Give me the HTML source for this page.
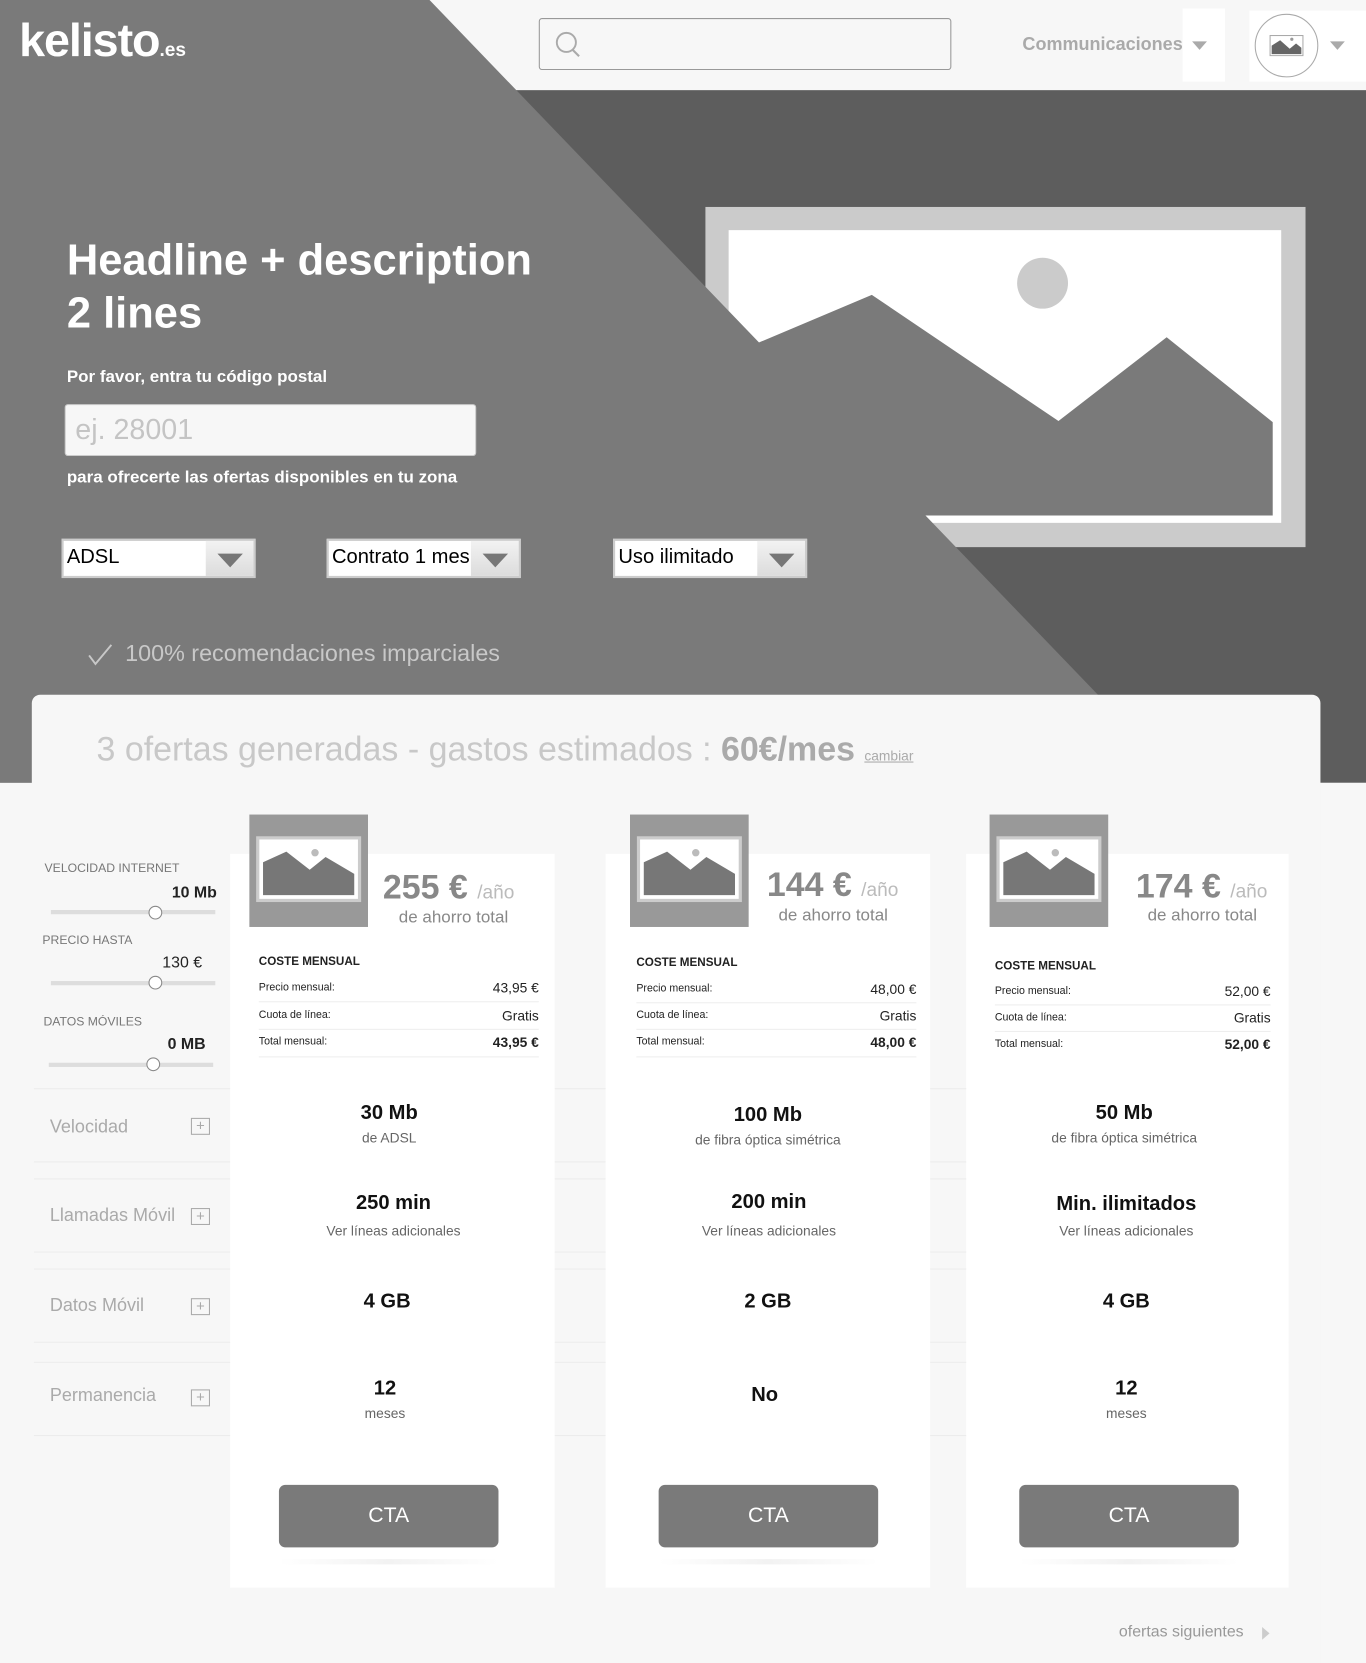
<!DOCTYPE html>
<html><head><meta charset="utf-8">
<style>
*{margin:0;padding:0;box-sizing:border-box}
html,body{width:1366px;height:1663px;overflow:hidden;background:#f7f7f7;font-family:"Liberation Sans",sans-serif}
#w{position:absolute;left:0;top:0;width:1288px;height:1568px;transform:scale(1.0606);transform-origin:0 0;background:#f7f7f7}
.a{position:absolute}
.t{position:absolute;white-space:nowrap}
.c{text-align:center}
.dd{position:absolute;width:183px;height:37px;background:#fff;border:2px solid #ccc;}
.dd span{position:absolute;left:3px;top:5px;font-size:19px;color:#000}
.dd i{position:absolute;right:0;top:0;width:45px;height:33px;background:linear-gradient(#f2f2f2,#dcdcdc)}
.dd i:after{content:"";position:absolute;left:11px;top:12px;border-left:12px solid transparent;border-right:12px solid transparent;border-top:13px solid #777}
.lbl{position:absolute;font-size:11.5px;color:#777;text-transform:uppercase}
.val{position:absolute;font-size:15px;color:#222;font-weight:bold}
.track{position:absolute;height:4px;background:#ddd;width:155px}
.knob{position:absolute;width:13px;height:13px;border-radius:50%;border:1px solid #888;background:#fff}
.col{position:absolute;background:#fff;top:805px;height:692px}
.row{position:absolute;left:32px;width:1183px;height:70px;border-top:1px solid #ececec;border-bottom:1px solid #ececec}
.rl{position:absolute;left:47px;font-size:17px;color:#aaa}
.plus{position:absolute;left:180px;width:18px;height:16px;border:1px solid #aaa;color:#aaa;font-size:14px;line-height:13px;text-align:center}
.big{position:absolute;font-weight:bold;font-size:19px;color:#111;text-align:center;width:306px}
.sub{position:absolute;font-size:13px;color:#666;text-align:center;width:306px}
.cta{position:absolute;width:207px;height:59px;background:#7a7a7a;border-radius:6px;color:#fff;font-size:20px;text-align:center;line-height:59px}
.tb{position:absolute;font-size:11px;color:#222}
</style></head><body><div id="w">
<!-- hero -->
<div class="a" style="left:0;top:0;width:1288px;height:738px;background:#5d5d5d"></div>
<div class="a" style="left:0;top:0;width:1288px;height:85px;background:#f7f7f7"></div>
<!-- hero image -->
<svg class="a" style="left:665px;top:195px" width="566" height="321">
<rect width="566" height="321" fill="#cbcbcb"/>
<rect x="22" y="22" width="521" height="276" fill="#fff"/>
<circle cx="318" cy="72" r="24" fill="#cbcbcb"/>
<polygon points="22,140 157,83 333,202 435,123 535,203 535,291 22,291" fill="#7a7a7a"/>
</svg>
<svg class="a" style="left:0;top:0" width="1288" height="738"><polygon points="0,0 405,0 1115,738 0,738" fill="#7a7a7a"/></svg>
<!-- header -->
<div class="t" style="left:18px;top:14px;font-size:44px;font-weight:bold;color:#fff;letter-spacing:-1px">kelisto<span style="font-size:18px;letter-spacing:0">.es</span></div>
<div class="a" style="left:508px;top:17px;width:389px;height:49px;border:1px solid #999;border-radius:3px;background:#f7f7f7"></div>
<svg class="a" style="left:522px;top:29px" width="28" height="26"><circle cx="12" cy="11" r="9" fill="none" stroke="#aaa" stroke-width="1.8"/><line x1="18" y1="18" x2="24" y2="24" stroke="#aaa" stroke-width="2"/></svg>
<div class="t" style="left:964px;top:32px;font-size:17px;font-weight:bold;color:#aaa">Communicaciones</div>
<div class="a" style="left:1115px;top:8px;width:40px;height:69px;background:#fff"></div>
<div class="a" style="left:1124px;top:39px;border-left:7px solid transparent;border-right:7px solid transparent;border-top:8px solid #aaa"></div>
<div class="a" style="left:1178px;top:10px;width:110px;height:67px;background:#fff"></div>
<div class="a" style="left:1183px;top:13px;width:60px;height:60px;border-radius:50%;border:1px solid #aaa;background:#fff"></div>
<svg class="a" style="left:1197px;top:33px" width="32" height="20"><rect x="0.5" y="0.5" width="31" height="19" fill="#fff" stroke="#aaa"/><polygon points="2,18 2,10 10,5 19,13 25,8 30,12 30,18" fill="#666"/><circle cx="21" cy="4" r="1.5" fill="#999"/></svg>
<div class="a" style="left:1254px;top:39px;border-left:7px solid transparent;border-right:7px solid transparent;border-top:8px solid #aaa"></div>
<!-- hero text -->
<div class="t" style="left:63px;top:220px;font-size:41px;font-weight:bold;color:#fff;line-height:50px">Headline + description<br>2 lines</div>
<div class="t" style="left:63px;top:347px;font-size:16px;font-weight:bold;color:#fff">Por favor, entra tu código postal</div>
<div class="a" style="left:61px;top:381px;width:388px;height:49px;background:#f7f7f7;border:1px solid #ccc;border-radius:3px"></div>
<div class="t" style="left:71px;top:390px;font-size:27px;color:#c4c4c4">ej. 28001</div>
<div class="t" style="left:63px;top:442px;font-size:16px;font-weight:bold;color:#fff">para ofrecerte las ofertas disponibles en tu zona</div>
<div class="dd" style="left:58px;top:508px"><span>ADSL</span><i></i></div>
<div class="dd" style="left:308px;top:508px"><span>Contrato 1 mes</span><i></i></div>
<div class="dd" style="left:578px;top:508px"><span>Uso ilimitado</span><i></i></div>
<svg class="a" style="left:82px;top:606px" width="26" height="22"><polyline points="2,12 8,20 23,2" fill="none" stroke="#c8c8c8" stroke-width="1.8"/></svg>
<div class="t" style="left:118px;top:603px;font-size:22px;color:#c8c8c8">100% recomendaciones imparciales</div>
<!-- panel -->
<div class="a" style="left:30px;top:655px;width:1215px;height:913px;background:#f7f7f7;border-radius:8px 8px 0 0"></div>
<div class="t" style="left:91px;top:688px;font-size:32px;color:#c8c8c8">3 ofertas generadas - gastos estimados : <b style="color:#aaa">60€/mes</b> <span style="font-size:13px;color:#aaa;text-decoration:underline">cambiar</span></div>
<!-- rows -->
<div class="row" style="top:1026px"></div>
<div class="row" style="top:1111px"></div>
<div class="row" style="top:1196px"></div>
<div class="row" style="top:1284px"></div>
<!-- columns -->
<div class="col" style="left:217px;width:306px"></div>
<div class="col" style="left:571px;width:306px"></div>
<div class="col" style="left:911px;width:304px"></div>
<!-- filters -->
<div class="lbl" style="left:42px;top:813px">Velocidad Internet</div>
<div class="val" style="left:162px;top:833px">10 Mb</div>
<div class="track" style="left:48px;top:858px"></div><div class="knob" style="left:140px;top:854px"></div>
<div class="lbl" style="left:40px;top:881px">Precio hasta</div>
<div class="val" style="left:153px;top:899px;font-weight:normal">130 €</div>
<div class="track" style="left:48px;top:925px"></div><div class="knob" style="left:140px;top:920px"></div>
<div class="lbl" style="left:41px;top:958px">Datos móviles</div>
<div class="val" style="left:158px;top:976px">0 MB</div>
<div class="track" style="left:46px;top:1002px"></div><div class="knob" style="left:138px;top:997px"></div>
<!-- row labels -->
<div class="rl" style="top:1053px">Velocidad</div><div class="plus" style="top:1054px">+</div>
<div class="rl" style="top:1136px">Llamadas Móvil</div><div class="plus" style="top:1139px">+</div>
<div class="rl" style="top:1221px">Datos Móvil</div><div class="plus" style="top:1224px">+</div>
<div class="rl" style="top:1306px">Permanencia</div><div class="plus" style="top:1310px">+</div>

<!-- card images -->
<svg class="a" style="left:235px;top:768px" width="112" height="106"><rect width="112" height="106" fill="#999"/><rect x="8" y="22" width="96" height="59" fill="#fff" stroke="#ccc" stroke-width="3"/><polygon points="13,76 13,45 35,35 57,52 72,40 99,56 99,76" fill="#777"/><circle cx="62" cy="36" r="3.5" fill="#bbb"/></svg>
<svg class="a" style="left:594px;top:768px" width="112" height="106"><rect width="112" height="106" fill="#999"/><rect x="8" y="22" width="96" height="59" fill="#fff" stroke="#ccc" stroke-width="3"/><polygon points="13,76 13,45 35,35 57,52 72,40 99,56 99,76" fill="#777"/><circle cx="62" cy="36" r="3.5" fill="#bbb"/></svg>
<svg class="a" style="left:933px;top:768px" width="112" height="106"><rect width="112" height="106" fill="#999"/><rect x="8" y="22" width="96" height="59" fill="#fff" stroke="#ccc" stroke-width="3"/><polygon points="13,76 13,45 35,35 57,52 72,40 99,56 99,76" fill="#777"/><circle cx="62" cy="36" r="3.5" fill="#bbb"/></svg>

<!-- prices -->
<div class="t" style="left:361px;top:818px;font-size:32px;font-weight:bold;color:#888">255 € <span style="font-size:18px;font-weight:normal;color:#bbb">/año</span></div>
<div class="t" style="left:376px;top:857px;font-size:16px;color:#888">de ahorro total</div>
<div class="t" style="left:723px;top:816px;font-size:32px;font-weight:bold;color:#888">144 € <span style="font-size:18px;font-weight:normal;color:#bbb">/año</span></div>
<div class="t" style="left:734px;top:855px;font-size:16px;color:#888">de ahorro total</div>
<div class="t" style="left:1071px;top:817px;font-size:32px;font-weight:bold;color:#888">174 € <span style="font-size:18px;font-weight:normal;color:#bbb">/año</span></div>
<div class="t" style="left:1082px;top:855px;font-size:16px;color:#888">de ahorro total</div>

<!-- tables -->
<div class="tb" style="left:244px;top:901px;font-weight:bold">COSTE MENSUAL</div>
<div class="tb" style="left:244px;top:926px;font-size:10px">Precio mensual:</div><div class="t" style="right:780px;top:924px;font-size:13px;color:#222">43,95 €</div>
<div class="a" style="left:244px;top:944px;width:264px;height:1px;background:#eee"></div>
<div class="tb" style="left:244px;top:952px;font-size:10px">Cuota de línea:</div><div class="t" style="right:780px;top:950px;font-size:13px;color:#222">Gratis</div>
<div class="a" style="left:244px;top:970px;width:264px;height:1px;background:#eee"></div>
<div class="tb" style="left:244px;top:977px;font-size:10px">Total mensual:</div><div class="t" style="right:780px;top:975px;font-size:13px;font-weight:bold;color:#222">43,95 €</div>
<div class="a" style="left:244px;top:996px;width:264px;height:1px;background:#eee"></div>

<div class="tb" style="left:600px;top:902px;font-weight:bold">COSTE MENSUAL</div>
<div class="tb" style="left:600px;top:927px;font-size:10px">Precio mensual:</div><div class="t" style="right:424px;top:925px;font-size:13px;color:#222">48,00 €</div>
<div class="a" style="left:600px;top:945px;width:264px;height:1px;background:#eee"></div>
<div class="tb" style="left:600px;top:952px;font-size:10px">Cuota de línea:</div><div class="t" style="right:424px;top:950px;font-size:13px;color:#222">Gratis</div>
<div class="a" style="left:600px;top:970px;width:264px;height:1px;background:#eee"></div>
<div class="tb" style="left:600px;top:977px;font-size:10px">Total mensual:</div><div class="t" style="right:424px;top:975px;font-size:13px;font-weight:bold;color:#222">48,00 €</div>
<div class="a" style="left:600px;top:996px;width:264px;height:1px;background:#eee"></div>

<div class="tb" style="left:938px;top:905px;font-weight:bold">COSTE MENSUAL</div>
<div class="tb" style="left:938px;top:929px;font-size:10px">Precio mensual:</div><div class="t" style="right:90px;top:927px;font-size:13px;color:#222">52,00 €</div>
<div class="a" style="left:938px;top:947px;width:260px;height:1px;background:#eee"></div>
<div class="tb" style="left:938px;top:954px;font-size:10px">Cuota de línea:</div><div class="t" style="right:90px;top:952px;font-size:13px;color:#222">Gratis</div>
<div class="a" style="left:938px;top:972px;width:260px;height:1px;background:#eee"></div>
<div class="tb" style="left:938px;top:979px;font-size:10px">Total mensual:</div><div class="t" style="right:90px;top:977px;font-size:13px;font-weight:bold;color:#222">52,00 €</div>

<!-- row values -->
<div class="big" style="left:214px;top:1039px">30 Mb</div><div class="sub" style="left:214px;top:1065px">de ADSL</div>
<div class="big" style="left:571px;top:1041px">100 Mb</div><div class="sub" style="left:571px;top:1067px">de fibra óptica simétrica</div>
<div class="big" style="left:907px;top:1039px">50 Mb</div><div class="sub" style="left:907px;top:1065px">de fibra óptica simétrica</div>

<div class="big" style="left:218px;top:1124px">250 min</div><div class="sub" style="left:218px;top:1153px">Ver líneas adicionales</div>
<div class="big" style="left:572px;top:1123px">200 min</div><div class="sub" style="left:572px;top:1153px">Ver líneas adicionales</div>
<div class="big" style="left:909px;top:1125px">Min. ilimitados</div><div class="sub" style="left:909px;top:1153px">Ver líneas adicionales</div>

<div class="big" style="left:212px;top:1217px">4 GB</div>
<div class="big" style="left:571px;top:1217px">2 GB</div>
<div class="big" style="left:909px;top:1217px">4 GB</div>

<div class="big" style="left:210px;top:1299px">12</div><div class="sub" style="left:210px;top:1325px">meses</div>
<div class="big" style="left:568px;top:1305px">No</div>
<div class="big" style="left:909px;top:1299px">12</div><div class="sub" style="left:909px;top:1325px">meses</div>

<!-- CTAs -->
<div class="cta" style="left:263px;top:1400px">CTA</div>
<div class="cta" style="left:621px;top:1400px">CTA</div>
<div class="cta" style="left:961px;top:1400px">CTA</div>
<div class="a" style="left:263px;top:1470px;width:207px;height:5px;background:linear-gradient(90deg,transparent,#f2f2f2,transparent)"></div>
<div class="a" style="left:621px;top:1470px;width:207px;height:5px;background:linear-gradient(90deg,transparent,#f2f2f2,transparent)"></div>
<div class="a" style="left:961px;top:1470px;width:207px;height:5px;background:linear-gradient(90deg,transparent,#f2f2f2,transparent)"></div>

<div class="t" style="left:1055px;top:1530px;font-size:15px;color:#999">ofertas siguientes</div>
<div class="a" style="left:1190px;top:1534px;border-top:6px solid transparent;border-bottom:6px solid transparent;border-left:7px solid #ccc"></div>
</div></body></html>
